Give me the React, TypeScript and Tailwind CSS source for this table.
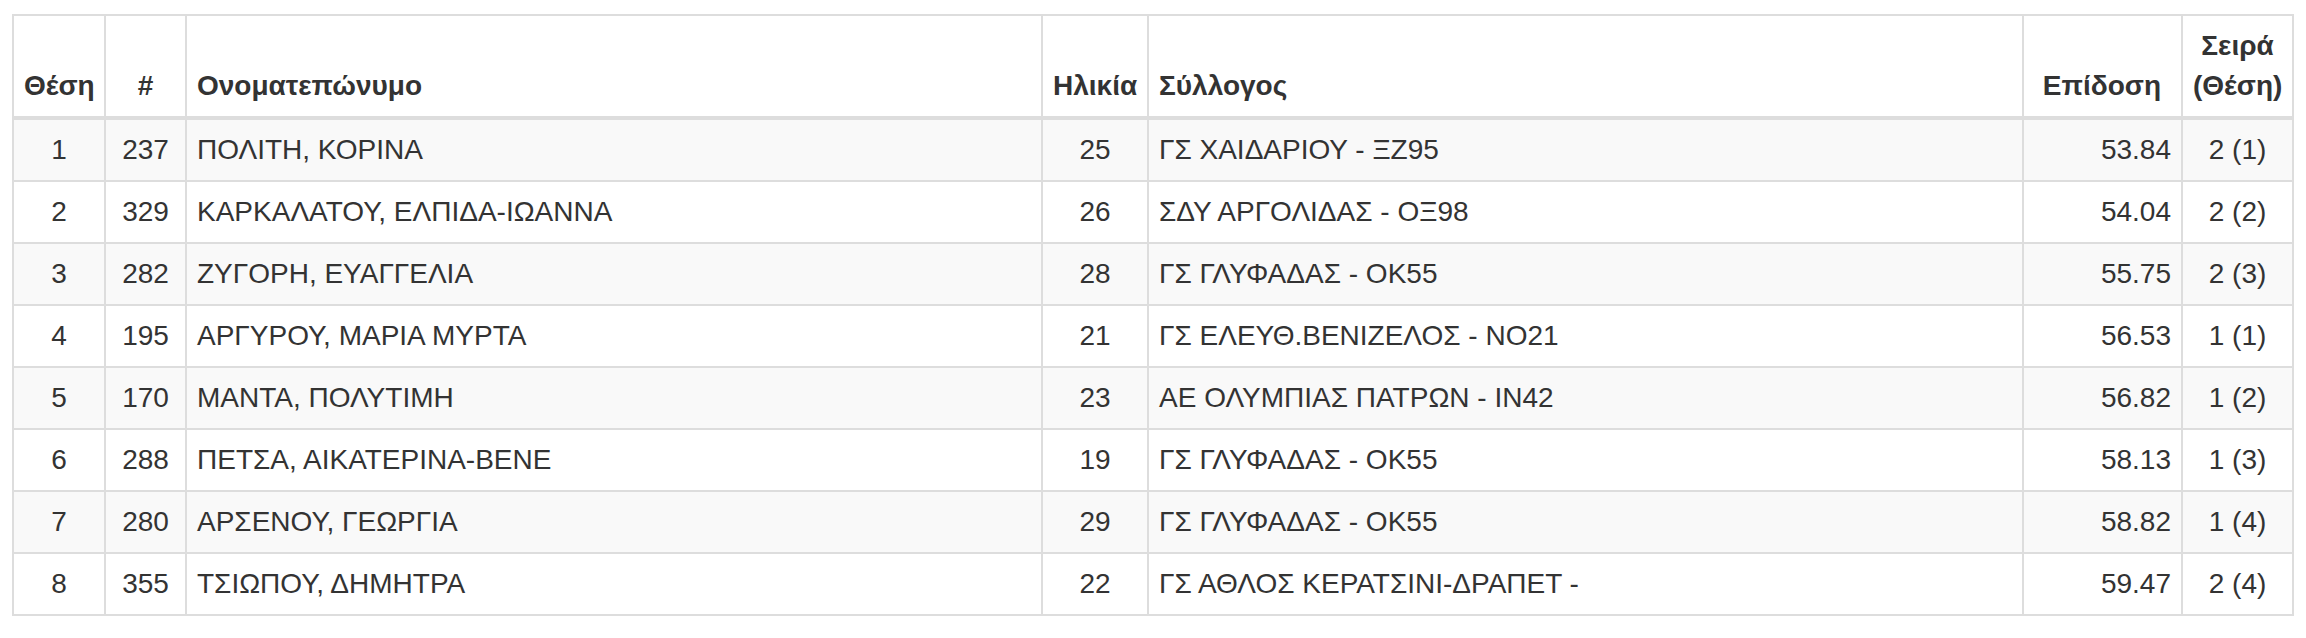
import React from 'react';

const rows = [
  { pos: 1, bib: 237, name: 'ΠΟΛΙΤΗ, ΚΟΡΙΝΑ', age: 25, club: 'ΓΣ ΧΑΙΔΑΡΙΟΥ - ΞΖ95', mark: '53.84', heat: '2 (1)' },
  { pos: 2, bib: 329, name: 'ΚΑΡΚΑΛΑΤΟΥ, ΕΛΠΙΔΑ-ΙΩΑΝΝΑ', age: 26, club: 'ΣΔΥ ΑΡΓΟΛΙΔΑΣ - ΟΞ98', mark: '54.04', heat: '2 (2)' },
  { pos: 3, bib: 282, name: 'ΖΥΓΟΡΗ, ΕΥΑΓΓΕΛΙΑ', age: 28, club: 'ΓΣ ΓΛΥΦΑΔΑΣ - ΟΚ55', mark: '55.75', heat: '2 (3)' },
  { pos: 4, bib: 195, name: 'ΑΡΓΥΡΟΥ, ΜΑΡΙΑ ΜΥΡΤΑ', age: 21, club: 'ΓΣ ΕΛΕΥΘ.ΒΕΝΙΖΕΛΟΣ - ΝΟ21', mark: '56.53', heat: '1 (1)' },
  { pos: 5, bib: 170, name: 'ΜΑΝΤΑ, ΠΟΛΥΤΙΜΗ', age: 23, club: 'ΑΕ ΟΛΥΜΠΙΑΣ ΠΑΤΡΩΝ - ΙΝ42', mark: '56.82', heat: '1 (2)' },
  { pos: 6, bib: 288, name: 'ΠΕΤΣΑ, ΑΙΚΑΤΕΡΙΝΑ-ΒΕΝΕ', age: 19, club: 'ΓΣ ΓΛΥΦΑΔΑΣ - ΟΚ55', mark: '58.13', heat: '1 (3)' },
  { pos: 7, bib: 280, name: 'ΑΡΣΕΝΟΥ, ΓΕΩΡΓΙΑ', age: 29, club: 'ΓΣ ΓΛΥΦΑΔΑΣ - ΟΚ55', mark: '58.82', heat: '1 (4)' },
  { pos: 8, bib: 355, name: 'ΤΣΙΩΠΟΥ, ΔΗΜΗΤΡΑ', age: 22, club: 'ΓΣ ΑΘΛΟΣ ΚΕΡΑΤΣΙΝΙ-ΔΡΑΠΕΤ -', mark: '59.47', heat: '2 (4)' },
];

const th = 'border-2 border-b-4 border-[#ddd] pl-[10px] py-[10px] align-bottom font-bold';
const td = 'border-2 border-[#ddd] px-[10px] py-[10px] align-top';

export default function App() {
  return (
    <div
      className="bg-white pl-[12px] pt-[14px] pb-[24px] text-[28px] leading-[40px] text-[#333]"
      style={{ fontFamily: '"Liberation Sans", Arial, sans-serif' }}
    >
      <table className="w-[2280px] table-fixed border-collapse">
        <thead>
          <tr>
            <th className={`${th} pr-[10px] w-[92px] text-center`}>Θέση</th>
            <th className={`${th} pr-[10px] w-[81px] text-center`}>#</th>
            <th className={`${th} pr-[10px] w-[856px] text-left`}>Ονοματεπώνυμο</th>
            <th className={`${th} pr-[10px] w-[106px] text-center`}>Ηλικία</th>
            <th className={`${th} pr-[10px] w-[875px] text-left`}>Σύλλογος</th>
            <th className={`${th} pr-[20px] w-[159px] text-right`}>Επίδοση</th>
            <th className={`${th} pr-[10px] w-[111px] text-center`}>
              Σειρά
              <br />
              (Θέση)
            </th>
          </tr>
        </thead>
        <tbody>
          {rows.map((r, i) => (
            <tr key={r.pos} className={i % 2 === 0 ? 'bg-[#f9f9f9]' : 'bg-white'}>
              <td className={`${td} text-center`}>{r.pos}</td>
              <td className={`${td} text-center`}>{r.bib}</td>
              <td className={`${td} text-left`}>{r.name}</td>
              <td className={`${td} text-center`}>{r.age}</td>
              <td className={`${td} text-left`}>{r.club}</td>
              <td className={`${td} text-right`}>{r.mark}</td>
              <td className={`${td} text-center`}>{r.heat}</td>
            </tr>
          ))}
        </tbody>
      </table>
    </div>
  );
}
